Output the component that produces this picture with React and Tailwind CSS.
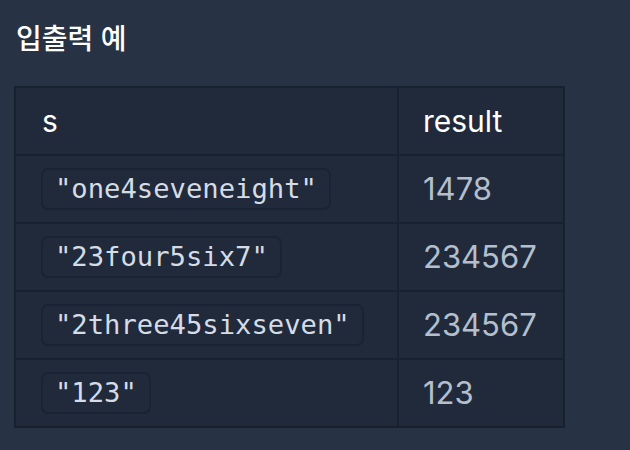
import React from 'react';

const rows = [
    { s: '"one4seveneight"', result: '1478' },
    { s: '"23four5six7"', result: '234567' },
    { s: '"2three45sixseven"', result: '234567' },
    { s: '"123"', result: '123' },
];

export default function App() {
    return (
        <div className="min-h-screen w-full bg-[#273344] pl-[14px] pt-[20px] font-['Inter','Noto_Sans_CJK_KR',sans-serif]">
            <h5 className="pl-[2px] text-[28px] leading-[38px] font-medium text-white mb-[28px]">입출력 예</h5>

            <table className="w-[551px] border-collapse border-2 border-[#172130] bg-[#212a3b]">
                <thead>
                    <tr className="h-[68px]">
                        <th className="w-[383px] border-2 border-[#172130] pl-[26px] text-left text-[30px] font-normal text-white">s</th>
                        <th className="border-2 border-[#172130] pl-[24px] text-left text-[30px] font-normal text-white">result</th>
                    </tr>
                </thead>
                <tbody>
                    {rows.map((row) => (
                        <tr key={row.s} className="h-[68px]">
                            <td className="border-2 border-[#172130] pl-[25px] align-middle">
                                <code className="inline-block rounded-[7px] border-2 border-[#1a2333] px-[12px] text-[27.2px] leading-[38px] text-[#d5dce6] font-['DejaVu_Sans_Mono',monospace]">
                                    {row.s}
                                </code>
                            </td>
                            <td className="border-2 border-[#172130] pl-[24px] text-[31px] text-[#b4bfcd]">{row.result}</td>
                        </tr>
                    ))}
                </tbody>
            </table>
        </div>
    );
}
